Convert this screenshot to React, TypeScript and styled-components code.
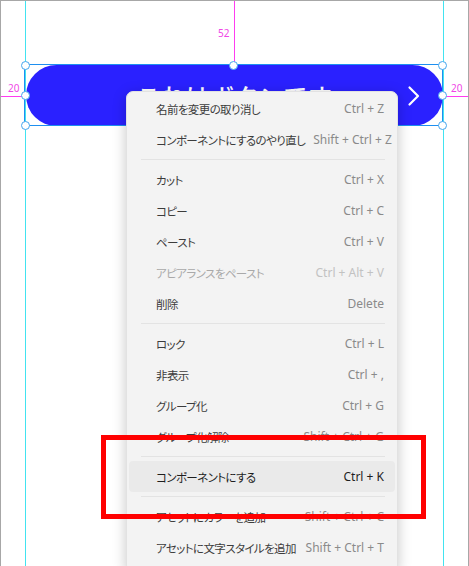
import React from 'react';
import styled, {createGlobalStyle} from "styled-components";

const GlobalStyle = createGlobalStyle`
  html, body {
    margin: 0;
    padding: 0;
    background: #ffffff;
  }
  * {
    box-sizing: border-box;
  }
`

const Stage = styled.div`
  position: relative;
  width: 469px;
  height: 566px;
  overflow: hidden;
  background: #ffffff;
  border: 1px solid #a7a7a7;
  border-bottom: none;
  padding: 64px 25px 0 25px;
  font-family: "Noto Sans CJK JP", "Noto Sans", sans-serif;
`

const BigButton = styled.div`
  display: grid;
  grid-template-columns: 1fr auto 1fr;
  align-items: center;
  height: 61px;
  border-radius: 31px;
  background: #2a21ff;
  color: #ffffff;
`

const ButtonLabel = styled.span`
  grid-column: 2;
  font-size: 24px;
  font-weight: 500;
  letter-spacing: 0.5px;
  line-height: 1;
`

const Chevron = styled.svg`
  grid-column: 3;
  justify-self: end;
  margin-right: 22px;
  display: block;
`

// canvas annotations: guides and distance labels sit on top of the artboard
const GuideV = styled.div<{ $x: number; $height: number; $color: string }>`
  position: absolute;
  left: ${p => p.$x}px;
  top: -1px;
  width: 1px;
  height: ${p => p.$height}px;
  background: ${p => p.$color};
`

const GuideH = styled.div<{ $x: number; $width: number }>`
  position: absolute;
  left: ${p => p.$x}px;
  top: 95px;
  width: ${p => p.$width}px;
  height: 1px;
  background: #ff3cf0;
`

const Measure = styled.span<{ $x: number; $y: number }>`
  position: absolute;
  left: ${p => p.$x}px;
  top: ${p => p.$y}px;
  font-family: "Noto Sans", sans-serif;
  font-size: 10px;
  line-height: 1;
  color: #f046e6;
`

const Selection = styled.div`
  position: absolute;
  left: 24px;
  top: 64px;
  width: 419px;
  height: 62px;
  border: 1px solid #1e8ff0;
  display: grid;
  grid-template-columns: 0 1fr 0 1fr 0;
  grid-template-rows: 0 1fr 0 1fr 0;
  margin: -1px 0 0 -1px;
`

const Handle = styled.span<{ $col: number; $row: number }>`
  grid-column: ${p => p.$col};
  grid-row: ${p => p.$row};
  justify-self: center;
  align-self: center;
  width: 9px;
  height: 9px;
  border-radius: 50%;
  background: #ffffff;
  border: 1.5px solid #45a6ee;
`

const Menu = styled.div`
  position: absolute;
  left: 125px;
  top: 90px;
  width: 272px;
  padding: 1px 2px 8px;
  background: #f3f3f3;
  border-radius: 7px;
  border: 1px solid #e2e2e2;
  box-shadow: 0 3px 14px rgba(0, 0, 0, 0.22);
`

const Row = styled.div<{ $active?: boolean }>`
  display: flex;
  align-items: center;
  justify-content: space-between;
  gap: 8px;
  height: 31px;
  padding: 0 11px 0 27px;
  border-radius: 4px;
  background: ${p => p.$active ? '#eaeaea' : 'transparent'};
`

const Label = styled.span<{ $active?: boolean; $disabled?: boolean }>`
  font-family: "Noto Sans CJK JP", sans-serif;
  font-feature-settings: "palt";
  font-size: 11.5px;
  letter-spacing: -0.6px;
  color: ${p => p.$disabled ? '#a9a9a9' : p.$active ? '#1e1e1e' : '#3c3c3c'};
  white-space: nowrap;
`

const Shortcut = styled.span<{ $active?: boolean; $disabled?: boolean }>`
  font-family: "Noto Sans", sans-serif;
  font-size: 12px;
  color: ${p => p.$disabled ? '#c2c2c2' : p.$active ? '#1e1e1e' : '#8a8a8a'};
  white-space: nowrap;
`

const Separator = styled.div`
  height: 9px;
  display: flex;
  align-items: center;
  padding: 0 10px 0 12px;

  &::after {
    content: "";
    flex: 1;
    height: 1px;
    background: #e3e3e3;
  }
`

// red annotation frame drawn over the screenshot
const Callout = styled.div`
  position: absolute;
  left: 100px;
  top: 434px;
  width: 325px;
  height: 84px;
  border: 5px solid #ff0000;
`

type Item = { label: string; key: string; active?: boolean; disabled?: boolean } | 'sep'

const items: Item[] = [
    {label: '名前を変更の取り消し', key: 'Ctrl + Z'},
    {label: 'コンポーネントにするのやり直し', key: 'Shift + Ctrl + Z'},
    'sep',
    {label: 'カット', key: 'Ctrl + X'},
    {label: 'コピー', key: 'Ctrl + C'},
    {label: 'ペースト', key: 'Ctrl + V'},
    {label: 'アピアランスをペースト', key: 'Ctrl + Alt + V', disabled: true},
    {label: '削除', key: 'Delete'},
    'sep',
    {label: 'ロック', key: 'Ctrl + L'},
    {label: '非表示', key: 'Ctrl + ,'},
    {label: 'グループ化', key: 'Ctrl + G'},
    {label: 'グループ化解除', key: 'Shift + Ctrl + G'},
    'sep',
    {label: 'コンポーネントにする', key: 'Ctrl + K', active: true},
    'sep',
    {label: 'アセットにカラーを追加', key: 'Shift + Ctrl + C'},
    {label: 'アセットに文字スタイルを追加', key: 'Shift + Ctrl + T'},
]

const handles = [
    [1, 1], [3, 1], [5, 1],
    [1, 3], [5, 3],
    [1, 5], [3, 5], [5, 5],
]

const App: React.FC = () => {
    return (
        <>
            <GlobalStyle/>
            <Stage>
                <BigButton>
                    <ButtonLabel>これはボタンです</ButtonLabel>
                    <Chevron width="14" height="22" viewBox="0 0 14 22">
                        <path d="M2.5 2.5 L11 11 L2.5 19.5" fill="none" stroke="#ffffff" strokeWidth="2.2"
                              strokeLinecap="round" strokeLinejoin="round"/>
                    </Chevron>
                </BigButton>

                <GuideV $x={24} $height={567} $color="#42e3f0"/>
                <GuideV $x={442} $height={567} $color="#42e3f0"/>
                <GuideV $x={233} $height={66} $color="#ff3cf0"/>
                <GuideH $x={-1} $width={25}/>
                <GuideH $x={443} $width={26}/>
                <Measure $x={217} $y={27}>52</Measure>
                <Measure $x={7} $y={82}>20</Measure>
                <Measure $x={450} $y={82}>20</Measure>

                <Selection>
                    {handles.map(([c, r]) => <Handle key={`${c}-${r}`} $col={c} $row={r}/>)}
                </Selection>

                <Menu>
                    {items.map((item, i) => {
                        if (item === 'sep') return <Separator key={i}/>
                        return (
                            <Row key={i} $active={item.active}>
                                <Label $active={item.active} $disabled={item.disabled}>{item.label}</Label>
                                <Shortcut $active={item.active} $disabled={item.disabled}>{item.key}</Shortcut>
                            </Row>
                        )
                    })}
                </Menu>

                <Callout/>
            </Stage>
        </>
    )
}

export default App
